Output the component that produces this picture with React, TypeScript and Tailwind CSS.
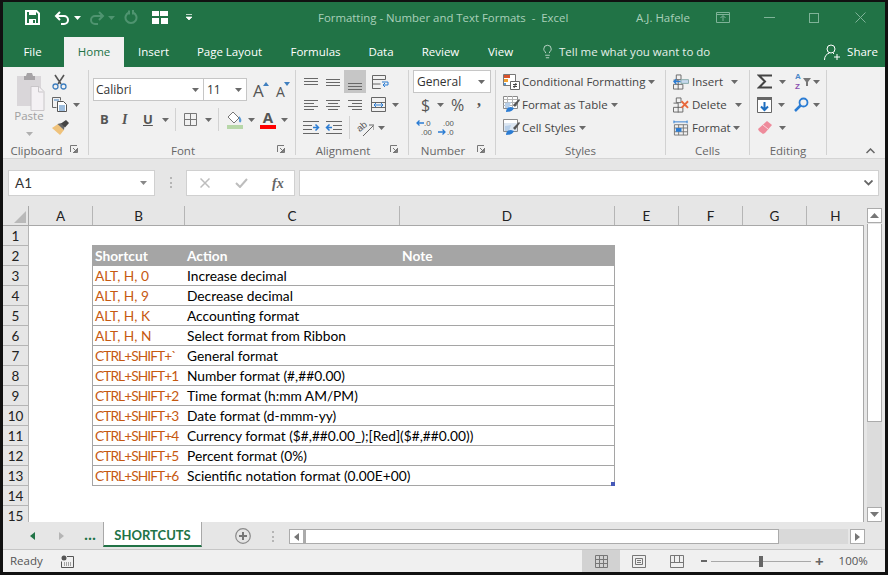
import React from "react";
import { Lightbulb } from "lucide-react";

const Caret = ({ className = "", color = "#6a6a6a" }: { className?: string; color?: string }) => (
  <svg width="7" height="4" viewBox="0 0 7 4" className={`shrink-0 ${className}`}>
    <path d="M0 0h7L3.5 4z" fill={color} />
  </svg>
);

const Launcher = () => (
  <svg width="8" height="8" viewBox="0 0 8 8" className="mt-[2px]">
    <path d="M.5 7V.5H7M7.5 3v4.5H3M3 3l3.5 3.5M6.5 4v2.500H4" fill="none" stroke="#777" />
  </svg>
);

// horizontal text lines used by the alignment buttons
const Lines = ({ rows, className = "" }: { rows: [number, number, number][]; className?: string }) => (
  <svg width="16" height="16" viewBox="0 0 16 16" className={`shrink-0 ${className}`}>
    {rows.map(([x1, x2, y], i) => (
      <path key={i} d={`M${x1} ${y + 0.5}H${x2}`} stroke="#686868" />
    ))}
  </svg>
);

const Save = () => (
  <svg width="15" height="15" viewBox="0 0 15 15" className="ml-[22px]">
    <path d="M1 1h10.500L14 3.500V14H1z" fill="none" stroke="#fff" strokeWidth="2" />
    <path d="M4 1h7v4H4zM4 9h7v5H4z" fill="#fff" />
    <path d="M8 10h2v3H8z" fill="#217346" />
  </svg>
);

const Undo = ({ color, flip }: { color: string; flip?: boolean }) => (
  <svg width="16" height="14" viewBox="0 0 16 14" style={flip ? { transform: "scaleX(-1)" } : undefined}>
    <path d="M6 1L2 5l4 4M2 5h8a3.500 3.500 0 0 1 0 8H7" fill="none" stroke={color} strokeWidth="2" />
  </svg>
);

const Repeat = () => (
  <svg width="14" height="15" viewBox="0 0 14 15">
    <path d="M9 2.500a5.500 5.500 0 1 1-4 0M9 0v4.500M5 .5v4" fill="none" stroke="#4f9470" strokeWidth="2" />
  </svg>
);

const QuickLayout = () => (
  <svg width="16" height="13" viewBox="0 0 16 13">
    <path d="M0 0h7v5H0zM8 0h8v5H8zM0 7h7v6H0zM9 7h7v6H9z" fill="#fff" />
  </svg>
);

const Paste = () => (
  <svg width="29" height="40" viewBox="0 0 29 40">
    <path d="M1 4h24v30H1z" fill="#d9d6d9" />
    <path d="M8 4h2l1-3h5l1 3h2v4H8z" fill="#a6a3a6" />
    <path d="M15 14.500h8l5 5v19H15z" fill="#f4f1f4" stroke="#c9c6c9" />
    <path d="M22.500 15v5h5" fill="none" stroke="#c9c6c9" />
  </svg>
);

const Scissors = () => (
  <svg width="15" height="16" viewBox="0 0 15 16">
    <path d="M3 1l6 9M12 1l-6 9" stroke="#555" strokeWidth="1.600" fill="none" />
    <circle cx="3.500" cy="12.500" r="2.500" fill="none" stroke="#3f7fbf" strokeWidth="1.300" />
    <circle cx="11.500" cy="12.500" r="2.500" fill="none" stroke="#3f7fbf" strokeWidth="1.300" />
  </svg>
);

const Copy = () => (
  <svg width="16" height="15" viewBox="0 0 16 15">
    <path d="M.5.500h8v3M.5.500v10h4" fill="none" stroke="#666" />
    <path d="M5.500 4.500h6l3 3v7h-9z" fill="#fff" stroke="#555" />
    <path d="M7 9h6M7 11h6M7 13h6M2 3h5" stroke="#3f7fbf" />
  </svg>
);

const Painter = () => (
  <svg width="17" height="15" viewBox="0 0 17 15">
    <path d="M0 8l6-4 6 6-4 5z" fill="#efc27b" />
    <path d="M5.500 4l4-1 3 3-.5 4z" fill="#666" />
    <path d="M9 3.500l5-3.500 3 3-4 4.500z" fill="#444" />
  </svg>
);

const Borders = () => (
  <svg width="14" height="14" viewBox="0 0 14 14">
    <path d="M.5.500h12v12H.5zM6.500 0v13M0 6.500h13" fill="none" stroke="#777" />
  </svg>
);

const FillColor = () => (
  <svg width="17" height="18" viewBox="0 0 17 18">
    <path d="M7 1l6 6-5 5-6-6z" fill="#fff" stroke="#777" />
    <path d="M13 5c2 2 3 4 2 6-1 1-2 0-2-1z" fill="#5b9bd5" />
    <path d="M1 14h16v4H1z" fill="#b7d7a8" />
  </svg>
);

const FontColor = () => (
  <div className="flex w-[16px] flex-col items-center">
    <span className="h-[13px] text-[15px] font-bold leading-[13px] text-[#555]">A</span>
    <div className="mt-[1px] h-[4px] w-[16px] bg-[#ff0000]" />
  </div>
);

const Wrap = () => (
  <svg width="17" height="16" viewBox="0 0 17 16">
    <path d="M.5 1.500h13M.5 1.500v13h8M.5 5.500h13M13.500 1.500v4M.5 10h8M.5 14.500h8" fill="none" stroke="#666" />
    <path d="M10 8h6v3h-5M13 9l-2 2 2 2" fill="none" stroke="#2b7cd3" />
  </svg>
);

const Merge = () => (
  <svg width="16" height="16" viewBox="0 0 16 16">
    <path d="M.5.500h14v14H.5zM0 5.500h15M0 10.500h15" fill="none" stroke="#666" />
    <path d="M3 8h9M5 6L3 8l2 2M10 6l2 2-2 2" fill="none" stroke="#2b7cd3" />
  </svg>
);

const Indent = ({ flip }: { flip?: boolean }) => (
  <svg width="17" height="14" viewBox="0 0 17 14" style={flip ? { transform: "scaleX(-1)" } : undefined}>
    <path d="M1 .5h16M8 4.500h9M8 8.500h9M1 12.500h16" stroke="#666" />
    <path d="M7 6.500H2M4.500 3.500l-3 3 3 3" fill="none" stroke="#2b7cd3" strokeWidth="1.500" />
  </svg>
);

const Orientation = () => (
  <div className="relative h-[18px] w-[18px]">
    <span className="block w-[13px] -rotate-[40deg] font-['Liberation_Sans',sans-serif] text-[9.500px] leading-[13px] text-[#555]">ab</span>
    <svg width="18" height="18" viewBox="0 0 18 18" className="absolute left-0 top-0">
      <path d="M7 17L17 7M13 6h5v5" fill="none" stroke="#666" />
    </svg>
  </div>
);

const DecimalUp = () => (
  <div className="relative h-[18px] w-[16px] font-['Liberation_Sans',sans-serif] text-[7.800px] leading-[9px] text-[#555]">
    <div className="pl-[8px]">.0</div>
    <div className="pl-[5px]">.00</div>
    <svg width="8" height="6" viewBox="0 0 8 6" className="absolute left-0 top-[1px]">
      <path d="M8 3H1M3.500.5L1 3l2.500 2.500" fill="none" stroke="#2b7cd3" strokeWidth="1.300" />
    </svg>
  </div>
);

const DecimalDown = () => (
  <div className="relative h-[18px] w-[16px] font-['Liberation_Sans',sans-serif] text-[7.800px] leading-[9px] text-[#555]">
    <div className="pl-[5px]">.00</div>
    <div className="pl-[9px]">.0</div>
    <svg width="8" height="6" viewBox="0 0 8 6" className="absolute left-0 top-[10px]">
      <path d="M0 3h7M4.500.5L7 3 4.500 5.500" fill="none" stroke="#2b7cd3" strokeWidth="1.300" />
    </svg>
  </div>
);

const Conditional = () => (
  <svg width="17" height="16" viewBox="0 0 17 16">
    <path d="M.5.500h12v11H.5z" fill="#fff" stroke="#777" />
    <path d="M1 1h6v3H1z" fill="#d9532c" />
    <path d="M1 5h4v3H1z" fill="#f0a030" />
    <path d="M1 9h2v2H1z" fill="#5b9bd5" />
    <path d="M7.500 7.500h9v8h-9z" fill="#fff" stroke="#666" />
    <path d="M10 10.500h4M10 12.500h4M13 9l-2 5" stroke="#444" fill="none" />
  </svg>
);

const TableBrush = ({ plain }: { plain?: boolean }) => (
  <svg width="17" height="17" viewBox="0 0 17 17">
    <path d="M.5.500h14v12H.5z" fill={plain ? "#dce6f1" : "#fff"} stroke="#8a8a8a" />
    {!plain && <path d="M.5 3.500h14M.5 6.500h14M.5 9.500h14M4.500 0v13M9.500 0v13" stroke="#b5b5b5" fill="none" />}
    {plain && <path d="M1 1h13v3H1z" fill="#fff" />}
    <path d="M2 7l6-1-2 6H2z" fill="#b8cfe8" />
    <path d="M10 9l6-6 1 1-5 7z" fill="#555" />
    <path d="M3 16c0-3 2-5 5-5l3 1c-1 3-4 4-8 4z" fill="#2b7cd3" />
  </svg>
);

const CellGrid = ({ kind }: { kind: "insert" | "delete" | "format" }) => (
  <svg width="16" height="16" viewBox="0 0 17 16">
    {kind !== "format" && (
      <path d="M3.500.500h5v5h-5zM.5 10.500h10v5H.5zM5.500 10v6M.5 6h5v5" fill="none" stroke="#666" />
    )}
    {kind === "insert" && (
      <>
        <path d="M8.500 5.500h8v4h-8z" fill="#c7d9ee" stroke="#8aa" />
        <path d="M8 7.500H1M3.500 5L1 7.500 3.500 10" fill="none" stroke="#2b7cd3" strokeWidth="1.500" />
      </>
    )}
    {kind === "delete" && <path d="M9 4l7 7M16 4l-7 7" stroke="#e8683c" strokeWidth="2" />}
    {kind === "format" && (
      <>
        <path d="M1.500 4.500h14v11h-14zM1.500 8h14M1.500 12h14M6 4.500v11M11 4.500v11" fill="none" stroke="#777" />
        <path d="M3 8h6v4H3z" fill="#2b7cd3" />
        <path d="M1 1.500h14M1 0v3M15 0v3" stroke="#2b7cd3" />
      </>
    )}
  </svg>
);

const FillDown = () => (
  <svg width="15" height="16" viewBox="0 0 15 16">
    <path d="M.5.500h14v15H.5z" fill="#fff" stroke="#666" />
    <path d="M0 0h15v3H0z" fill="#666" />
    <path d="M7.500 5v8M4 9.500l3.500 3.500 3.500-3.500" fill="none" stroke="#1f6fc0" strokeWidth="2" />
  </svg>
);

const Sigma = () => (
  <svg width="15" height="15" viewBox="0 0 15 15">
    <path d="M15 1.500H2L8 7.500 2 13.500h13" fill="none" stroke="#444" strokeWidth="2" />
  </svg>
);

const SortFilter = () => (
  <div className="flex items-center">
    <div className="flex w-[8px] flex-col font-['Liberation_Sans',sans-serif] text-[8px] font-bold leading-[9.300px]">
      <span className="text-[#4a86c8]">A</span>
      <span className="text-[#8a4fb0]">Z</span>
    </div>
    <svg width="8" height="8" viewBox="0 0 8 8">
      <path d="M0 0h8L5 4v4H3V4z" fill="#777" />
    </svg>
  </div>
);

const Find = () => (
  <svg width="15" height="15" viewBox="0 0 15 15">
    <circle cx="9.500" cy="5.500" r="4" fill="none" stroke="#2b7cd3" strokeWidth="1.800" />
    <path d="M6.500 8.500L1 14" stroke="#2b7cd3" strokeWidth="2.500" />
  </svg>
);

const Eraser = () => (
  <svg width="14" height="13" viewBox="0 0 14 13">
    <path d="M9 0l5 4-7 8-2 1-4-3-1-2z" fill="#ee8b9b" />
    <path d="M5 4l5 4" stroke="#fbd5da" />
  </svg>
);

const Group = ({
  width,
  label,
  launcher,
  children,
}: {
  width: string;
  label: string;
  launcher?: boolean;
  children: React.ReactNode;
}) => (
  <div className={`flex h-[85px] shrink-0 flex-col border-r border-[#d2d2d2] ${width}`}>
    <div className="h-[73px]">{children}</div>
    <div className="flex h-[12px] text-[11.500px] leading-[16px] text-[#666]">
      <span className="flex-1 text-center">{label}</span>
      {launcher && (
        <span className="w-[18px]">
          <Launcher />
        </span>
      )}
    </div>
  </div>
);

const RibbonRow = ({ className = "", children }: { className?: string; children: React.ReactNode }) => (
  <div className={`flex h-[23px] items-center ${className}`}>{children}</div>
);

const TABS = [
  { name: "Insert", w: "w-[59px]" },
  { name: "Page Layout", w: "w-[93px]" },
  { name: "Formulas", w: "w-[79px]" },
  { name: "Data", w: "w-[52px]" },
  { name: "Review", w: "w-[67px]" },
  { name: "View", w: "w-[53px]" },
];

const COLS = [
  { name: "A", w: "w-[64px]" },
  { name: "B", w: "w-[92px]" },
  { name: "C", w: "w-[215px]" },
  { name: "D", w: "w-[215px]" },
  { name: "E", w: "w-[64px]" },
  { name: "F", w: "w-[64px]" },
  { name: "G", w: "w-[64px]" },
  { name: "H", w: "w-[57px]" },
];

const SHORTCUTS = [
  ["ALT, H, 0", "Increase decimal"],
  ["ALT, H, 9", "Decrease decimal"],
  ["ALT, H, K", "Accounting format"],
  ["ALT, H, N", "Select format from Ribbon"],
  ["CTRL+SHIFT+`", "General format"],
  ["CTRL+SHIFT+1", "Number format (#,##0.00)"],
  ["CTRL+SHIFT+2", "Time format (h:mm AM/PM)"],
  ["CTRL+SHIFT+3", "Date format (d-mmm-yy)"],
  ["CTRL+SHIFT+4", "Currency format ($#,##0.00_);[Red]($#,##0.00))"],
  ["CTRL+SHIFT+5", "Percent format (0%)"],
  ["CTRL+SHIFT+6", "Scientific notation format (0.00E+00)"],
];

const RowNumber = ({ n }: { n: number }) => (
  <div className="h-[20px] w-[26px] shrink-0 border-b border-r border-[#b5b5b5] bg-[#e6e6e6] text-center font-['Lato',sans-serif] text-[13.500px] leading-[20px] text-[#222]">
    {n}
  </div>
);

function Ribbon() {
  return (
    <div className="flex h-[92px] border-b border-[#d4d4d4] bg-[#f1f1f1] pt-[3px] text-[11.500px] text-[#444]">
      <Group width="w-[86px]" label="Clipboard" launcher>
        <div className="flex pl-[13px] pt-[2px]">
          <div className="flex w-[29px] flex-col items-center text-[#a0a0a0]">
            <Paste />
            <span className="ml-[-3px] mt-[-5px] text-[11.500px] leading-[18px]">Paste</span>
            <Caret className="ml-[-3px] mt-[7px]" color="#b0b0b0" />
          </div>
          <div className="ml-[7px] mt-[-2px] flex flex-col">
            <RibbonRow><Scissors /></RibbonRow>
            <RibbonRow>
              <Copy />
              <Caret className="ml-[5px]" />
            </RibbonRow>
            <RibbonRow><Painter /></RibbonRow>
          </div>
        </div>
      </Group>

      <Group width="w-[207px]" label="Font" launcher>
        <div className="flex h-[31px] items-end pl-[4px]">
          <div className="flex h-[23px] w-[111px] items-center justify-between border border-[#c6c6c6] bg-white pl-[2px] pr-[4px] text-[12px] text-[#333]">
            Calibri
            <Caret />
          </div>
          <div className="ml-[-1px] flex h-[23px] w-[44px] items-center justify-between border border-[#c6c6c6] bg-white pl-[3px] pr-[4px] text-[12px] text-[#333]">
            11
            <Caret />
          </div>
          <div className="relative mb-[2px] ml-[6px] h-[18px] w-[14px] text-[17px] leading-[20px] text-[#555]">
            A
            <svg width="6" height="4" viewBox="0 0 6 4" className="absolute right-[-2px] top-[1px]">
              <path d="M3 0l3 4H0z" fill="#3f7fbf" />
            </svg>
          </div>
          <div className="relative mb-[2px] ml-[9px] h-[18px] w-[12px] text-[14px] leading-[21px] text-[#555]">
            A
            <svg width="6" height="4" viewBox="0 0 6 4" className="absolute right-[-2px] top-[1px]">
              <path d="M3 4L0 0h6z" fill="#3f7fbf" />
            </svg>
          </div>
        </div>
        <div className="mt-[7px] flex h-[23px] items-center pl-[11px]">
          <span className="w-[18px] text-[13px] font-bold text-[#555]">B</span>
          <span className="w-[25px] pl-[4px] font-['Liberation_Serif',serif] text-[14px] font-bold italic text-[#555]">I</span>
          <span className="w-[19px] text-[13px] font-bold leading-[15px] text-[#555] underline">U</span>
          <Caret />
          <div className="ml-[6px] h-[23px] w-px bg-[#d2d2d2]" />
          <span className="ml-[8px]"><Borders /></span>
          <Caret className="ml-[7px]" />
          <div className="ml-[6px] mr-[7px] h-[23px] w-px bg-[#d2d2d2]" />
          <FillColor />
          <Caret className="ml-[5px]" />
          <span className="ml-[5px]"><FontColor /></span>
          <Caret className="ml-[5px]" />
        </div>
      </Group>

      <Group width="w-[113px]" label="Alignment" launcher>
        <RibbonRow className="pl-[7px]">
          <Lines rows={[[1, 15, 4], [1, 15, 7], [1, 15, 10]]} />
          <Lines className="ml-[6px]" rows={[[1, 15, 5], [1, 15, 8], [1, 15, 11]]} />
          <div className="ml-[3px] flex h-[23px] w-[22px] items-center justify-center bg-[#c6c6c6]">
            <Lines rows={[[1, 15, 9], [1, 15, 12], [1, 15, 15]]} />
          </div>
          <span className="ml-[6px]"><Wrap /></span>
        </RibbonRow>
        <RibbonRow className="pl-[7px]">
          <Lines rows={[[1, 15, 3], [1, 11, 6], [1, 15, 9], [1, 11, 12]]} />
          <Lines className="ml-[6px]" rows={[[1, 15, 3], [3, 13, 6], [1, 15, 9], [3, 13, 12]]} />
          <Lines className="ml-[6px]" rows={[[1, 15, 3], [5, 15, 6], [1, 15, 9], [5, 15, 12]]} />
          <span className="ml-[8px]"><Merge /></span>
          <Caret className="ml-[5px]" />
        </RibbonRow>
        <RibbonRow className="pl-[7px]">
          <Indent flip />
          <span className="ml-[5px]"><Indent /></span>
          <div className="ml-[7px] h-[23px] w-px bg-[#d2d2d2]" />
          <span className="ml-[6px]"><Orientation /></span>
          <Caret className="ml-[4px]" />
        </RibbonRow>
      </Group>

      <Group width="w-[87px]" label="Number" launcher>
        <div className="pl-[4px]">
          <div className="flex h-[23px] w-[78px] items-center justify-between border border-[#c6c6c6] bg-white pl-[3px] pr-[5px] text-[12px] text-[#333]">
            General
            <Caret />
          </div>
          <RibbonRow className="pl-[8px] text-[#555]">
            <span className="w-[17px] text-[16px]">$</span>
            <Caret className="ml-[-1px]" />
            <span className="ml-[7px] w-[18px] text-[16px]">%</span>
            <span className="mb-[8px] ml-[8px] font-['Liberation_Serif',serif] text-[16px] font-bold leading-[14px]">,</span>
          </RibbonRow>
          <RibbonRow className="pl-[3px]">
            <DecimalUp />
            <span className="ml-[6px]"><DecimalDown /></span>
          </RibbonRow>
        </div>
      </Group>

      <Group width="w-[170px]" label="Styles">
        <div className="pl-[7px]">
          <RibbonRow>
            <Conditional />
            <span className="ml-[2px] whitespace-nowrap">Conditional Formatting</span>
            <Caret className="ml-[3px]" />
          </RibbonRow>
          <RibbonRow>
            <TableBrush />
            <span className="ml-[2px] whitespace-nowrap">Format as Table</span>
            <Caret className="ml-[3px]" />
          </RibbonRow>
          <RibbonRow>
            <TableBrush plain />
            <span className="ml-[2px] whitespace-nowrap">Cell Styles</span>
            <Caret className="ml-[3px]" />
          </RibbonRow>
        </div>
      </Group>

      <Group width="w-[84px]" label="Cells">
        <div className="pl-[7px]">
          <RibbonRow>
            <CellGrid kind="insert" />
            <span className="ml-[3px] w-[39px]">Insert</span>
            <Caret />
          </RibbonRow>
          <RibbonRow>
            <CellGrid kind="delete" />
            <span className="ml-[3px] w-[43px]">Delete</span>
            <Caret />
          </RibbonRow>
          <RibbonRow>
            <CellGrid kind="format" />
            <span className="ml-[3px] w-[41px]">Format</span>
            <Caret />
          </RibbonRow>
        </div>
      </Group>

      <Group width="w-[77px]" label="Editing">
        <div className="pl-[7px]">
          <RibbonRow>
            <Sigma />
            <Caret className="ml-[7px]" />
            <span className="ml-[9px] w-[17px]"><SortFilter /></span>
            <Caret className="ml-[1px]" />
          </RibbonRow>
          <RibbonRow>
            <FillDown />
            <Caret className="ml-[6px]" />
            <span className="ml-[9px] w-[19px]"><Find /></span>
            <Caret />
          </RibbonRow>
          <RibbonRow className="pl-[1px]">
            <Eraser />
            <Caret className="ml-[7px]" />
          </RibbonRow>
        </div>
      </Group>

      <div className="flex h-[85px] flex-1 items-end justify-end pb-[1px] pr-[10px]">
        <svg width="9" height="6" viewBox="0 0 9 6">
          <path d="M.5 5l4-4 4 4" fill="none" stroke="#666" strokeWidth="1.500" />
        </svg>
      </div>
    </div>
  );
}

function Grid() {
  return (
    <div className="flex min-w-0 flex-1 flex-col">
      <div className="flex h-[20px] border-b border-[#a8a8a8] bg-[#e6e6e6]">
        <div className="flex w-[26px] shrink-0 items-end justify-end border-r border-[#a8a8a8] p-[2px]">
          <svg width="12" height="12" viewBox="0 0 12 12">
            <path d="M12 0v12H0z" fill="#b9b9b9" />
          </svg>
        </div>
        {COLS.map((c) => (
          <div
            key={c.name}
            className={`h-full shrink-0 border-r border-[#b5b5b5] text-center font-['Lato',sans-serif] text-[13.500px] leading-[21px] text-[#222] last:border-r-0 ${c.w}`}
          >
            {c.name}
          </div>
        ))}
      </div>
      <div className="h-[296px] overflow-hidden border-r border-[#a8a8a8] bg-white font-['Lato',sans-serif] text-[13.750px] leading-[20px]">
        <div className="flex">
          <RowNumber n={1} />
        </div>
        <div className="flex">
          <RowNumber n={2} />
          <div className="ml-[63px] mt-[-1px] flex h-[21px] w-[523px] bg-[#a5a5a5] pt-px font-bold text-white">
            <span className="w-[92px] pl-[3px]">Shortcut</span>
            <span className="w-[215px] pl-[3px]">Action</span>
            <span className="pl-[3px]">Note</span>
          </div>
        </div>
        {SHORTCUTS.map(([key, action], i) => (
          <div key={key} className="flex">
            <RowNumber n={i + 3} />
            <div className="relative ml-[63px] flex h-[20px] w-[523px] border-x border-b border-[#a5a5a5]">
              <span
                className={`w-[91px] whitespace-nowrap pl-[2px] text-[#c65911] ${key.startsWith("CTRL") ? "tracking-[-0.95px]" : ""}`}
              >
                {key}
              </span>
              <span className="whitespace-nowrap pl-[3px] text-black">{action}</span>
              {i === 10 && <div className="absolute bottom-[-1px] right-[-1px] h-[4px] w-[4px] bg-[#4558b8]" />}
            </div>
          </div>
        ))}
        <div className="flex">
          <RowNumber n={14} />
        </div>
        <div className="flex">
          <RowNumber n={15} />
        </div>
      </div>
    </div>
  );
}

function VerticalScroll() {
  return (
    <div className="ml-[3px] flex w-[15px] shrink-0 flex-col pt-[2px]">
      <div className="flex h-[15px] items-center justify-center border border-[#ababab] bg-white">
        <svg width="9" height="5" viewBox="0 0 9 5"><path d="M4.500 0l4.500 5H0z" fill="#777" /></svg>
      </div>
      <div className="mt-px h-[198px] border-x border-b border-[#ababab] bg-white" />
      <div className="flex-1 bg-[#dcdcdc]" />
      <div className="flex h-[15px] items-center justify-center border border-[#ababab] bg-white">
        <svg width="9" height="5" viewBox="0 0 9 5"><path d="M4.500 5L9 0H0z" fill="#777" /></svg>
      </div>
    </div>
  );
}

function SheetBar() {
  return (
    <div className="flex h-[28px] items-start border-b border-[#c6c6c6] bg-[#e6e6e6]">
      <svg width="5" height="8" viewBox="0 0 5 8" className="ml-[27px] mt-[10px]"><path d="M5 0v8L0 4z" fill="#217346" /></svg>
      <svg width="5" height="8" viewBox="0 0 5 8" className="ml-[24px] mt-[10px]"><path d="M0 0v8l5-4z" fill="#b5b5b5" /></svg>
      <span className="ml-[20px] mt-[2px] w-[19px] text-[14px] font-bold leading-[22px] text-[#217346]">...</span>
      <div className="h-[25px] w-[99px] border-x border-b-2 border-[#a8a8a8] border-b-[#217346] bg-white text-center font-['Lato',sans-serif] text-[13px] font-bold leading-[26px] text-[#217346]">
        SHORTCUTS
      </div>
      <svg width="16" height="16" viewBox="0 0 16 16" className="ml-[33px] mt-[6px]">
        <circle cx="8" cy="8" r="7.300" fill="none" stroke="#8a8a8a" strokeWidth="1.200" />
        <path d="M8 4v8M4 8h8" stroke="#777" strokeWidth="2" />
      </svg>
      <div className="ml-[21px] mt-[9px] flex h-[11px] w-[2px] flex-col justify-between">
        <div className="h-[2px] bg-[#b5b5b5]" />
        <div className="h-[2px] bg-[#b5b5b5]" />
        <div className="h-[2px] bg-[#b5b5b5]" />
      </div>
      <div className="ml-[15px] mt-[7px] flex h-[15px] w-[15px] items-center justify-center border border-[#ababab] bg-white">
        <svg width="5" height="8" viewBox="0 0 5 8"><path d="M5 0v8L0 4z" fill="#777" /></svg>
      </div>
      <div className="mt-[7px] h-[15px] w-[475px] border-y border-l-2 border-r border-[#ababab] bg-white" />
      <div className="mt-[7px] h-[15px] w-[69px] bg-[#d9d9d9]" />
      <div className="ml-[2px] mt-[7px] flex h-[15px] w-[15px] items-center justify-center border border-[#ababab] bg-white">
        <svg width="5" height="8" viewBox="0 0 5 8"><path d="M0 0v8l5-4z" fill="#777" /></svg>
      </div>
    </div>
  );
}

function StatusBar() {
  return (
    <div className="flex h-[22px] items-center bg-[#f0f0f0] text-[11.500px] text-[#555]">
      <span className="ml-[7px] w-[51px]">Ready</span>
      <svg width="13" height="13" viewBox="0 0 13 13">
        <circle cx="3" cy="3" r="2.500" fill="#555" />
        <path d="M6 1.500h6.500v11H.5V6.500" fill="none" stroke="#555" />
        <path d="M3 8h8M3 10h8" stroke="#555" strokeDasharray="1 1" />
      </svg>
      <div className="ml-[508px] flex h-full w-[38px] items-center justify-center bg-[#d2d2d2]">
        <svg width="13" height="13" viewBox="0 0 13 13">
          <path d="M.5.500h12v12H.5zM4.500 0v13M8.500 0v13M0 4.500h13M0 8.500h13" fill="none" stroke="#777" />
        </svg>
      </div>
      <svg width="14" height="13" viewBox="0 0 14 13" className="ml-[12px]">
        <path d="M.5.500h13v12H.5zM3.500 3.500h7v6h-7zM5 5.500h4M5 7.500h4" fill="none" stroke="#777" />
      </svg>
      <svg width="14" height="13" viewBox="0 0 14 13" className="ml-[24px]">
        <path d="M.5.500h13v12H.5zM.5 7.500h13M4.500 0v7.500M9.500 0v7.500" fill="none" stroke="#777" />
      </svg>
      <div className="ml-[17px] h-[2px] w-[6px] bg-[#666]" />
      <div className="ml-[4px] flex h-[10px] w-[100px] items-center">
        <div className="h-px w-[48px] bg-[#a8a8a8]" />
        <div className="h-[11px] w-[4px] bg-[#666]" />
        <div className="h-px flex-1 bg-[#a8a8a8]" />
      </div>
      <span className="ml-[4px] text-[15px] font-bold leading-[15px] text-[#666]">+</span>
      <span className="ml-[15px]">100%</span>
    </div>
  );
}

export default function App() {
  return (
    <div className="h-[575px] w-[888px] overflow-hidden bg-[#111] pb-[3px] pl-[3px] pr-[3px] pt-[2px] font-['Open_Sans',sans-serif]">
      <div className="flex h-[570px] flex-col bg-[#e6e6e6]">
        {/* title bar */}
        <div className="flex h-[31px] shrink-0 items-center bg-[#217346] text-[11.400px] text-[#a9d0ba]">
          <Save />
          <span className="ml-[14px]"><Undo color="#fff" /></span>
          <Caret className="ml-[4px]" color="#fff" />
          <span className="ml-[8px]"><Undo color="#4f9470" flip /></span>
          <Caret className="ml-[3px]" color="#4f9470" />
          <span className="ml-[9px]"><Repeat /></span>
          <span className="ml-[14px]"><QuickLayout /></span>
          <svg width="6" height="7" viewBox="0 0 6 7" className="ml-[18px]">
            <path d="M0 .5h6M0 3h6l-3 3z" fill="#fff" stroke="#fff" strokeWidth=".7" />
          </svg>
          <span className="ml-[126px] w-[318px] whitespace-nowrap">Formatting - Number and Text Formats&nbsp; -&nbsp; Excel</span>
          <span className="whitespace-nowrap text-[11.500px]">A.J. Hafele</span>
          <svg width="14" height="11" viewBox="0 0 14 11" className="ml-[26px]">
            <path d="M.5.500h13v10H.5zM0 2.500h14M7 9V4M4.500 6L7 3.500 9.500 6" fill="none" stroke="#7fb398" />
          </svg>
          <div className="ml-[34px] h-px w-[11px] bg-[#7fb398]" />
          <div className="ml-[34px] h-[10px] w-[10px] border border-[#7fb398]" />
          <svg width="11" height="11" viewBox="0 0 11 11" className="ml-[36px]">
            <path d="M.5.500l10 10M10.500.500l-10 10" stroke="#7fb398" />
          </svg>
        </div>

        {/* tabs */}
        <div className="flex h-[34px] shrink-0 items-end bg-[#217346] text-[11.500px] text-white">
          <div className="h-[30px] w-[59px] text-center leading-[29px]">File</div>
          <div className="ml-[2px] h-[30px] w-[60px] bg-[#f1f1f1] text-center leading-[29px] text-[#217346]">Home</div>
          {TABS.map((t) => (
            <div key={t.name} className={`h-[30px] text-center leading-[29px] ${t.w}`}>
              {t.name}
            </div>
          ))}
          <div className="flex h-[30px] items-center pl-[13px] text-[#e4efe9]">
            <Lightbulb size={15} strokeWidth={1.200} className="mt-[-1px]" />
            <span className="ml-[4px] whitespace-nowrap">Tell me what you want to do</span>
          </div>
          <div className="ml-auto flex h-[30px] items-center pr-[7px]">
            <svg width="16" height="17" viewBox="0 0 16 17">
              <circle cx="7" cy="5" r="4" fill="none" stroke="#fff" />
              <path d="M.5 16c0-4 2-6 5-7M9 9l1 1M13 10v6M10 13h6" fill="none" stroke="#fff" />
            </svg>
            <span className="ml-[7px]">Share</span>
          </div>
        </div>

        <Ribbon />

        {/* formula bar */}
        <div className="flex h-[47px] shrink-0 items-start pt-[11px] text-[#333]">
          <div className="ml-[5px] flex h-[26px] w-[147px] items-center justify-between border border-[#d0d0d0] bg-white pl-[6px] pr-[7px] font-['Lato',sans-serif] text-[13.500px]">
            A1
            <Caret color="#888" />
          </div>
          <div className="ml-[15px] mt-[7px] flex h-[11px] w-[2px] flex-col justify-between">
            <div className="h-[2px] bg-[#b5b5b5]" />
            <div className="h-[2px] bg-[#b5b5b5]" />
            <div className="h-[2px] bg-[#b5b5b5]" />
          </div>
          <div className="ml-[14px] flex h-[26px] w-[109px] items-center border border-[#d0d0d0] bg-white pl-[13px]">
            <svg width="10" height="10" viewBox="0 0 10 10"><path d="M.5.500l9 9M9.500.500l-9 9" stroke="#bdbdbd" strokeWidth="1.500" /></svg>
            <svg width="13" height="10" viewBox="0 0 13 10" className="ml-[25px]"><path d="M1 5l4 4 7-8" fill="none" stroke="#bdbdbd" strokeWidth="2" /></svg>
            <span className="ml-[24px] font-['Liberation_Serif',serif] text-[14px] font-bold italic text-[#666]">fx</span>
          </div>
          <div className="ml-[4px] flex h-[26px] w-[580px] items-center justify-end border border-[#d0d0d0] bg-white pr-[5px]">
            <svg width="9" height="6" viewBox="0 0 9 6"><path d="M.5.500l4 4 4-4" fill="none" stroke="#666" strokeWidth="1.800" /></svg>
          </div>
        </div>

        {/* sheet */}
        <div className="flex h-[316px] shrink-0 pr-[3px]">
          <Grid />
          <VerticalScroll />
        </div>
        <SheetBar />
        <StatusBar />
      </div>
    </div>
  );
}
